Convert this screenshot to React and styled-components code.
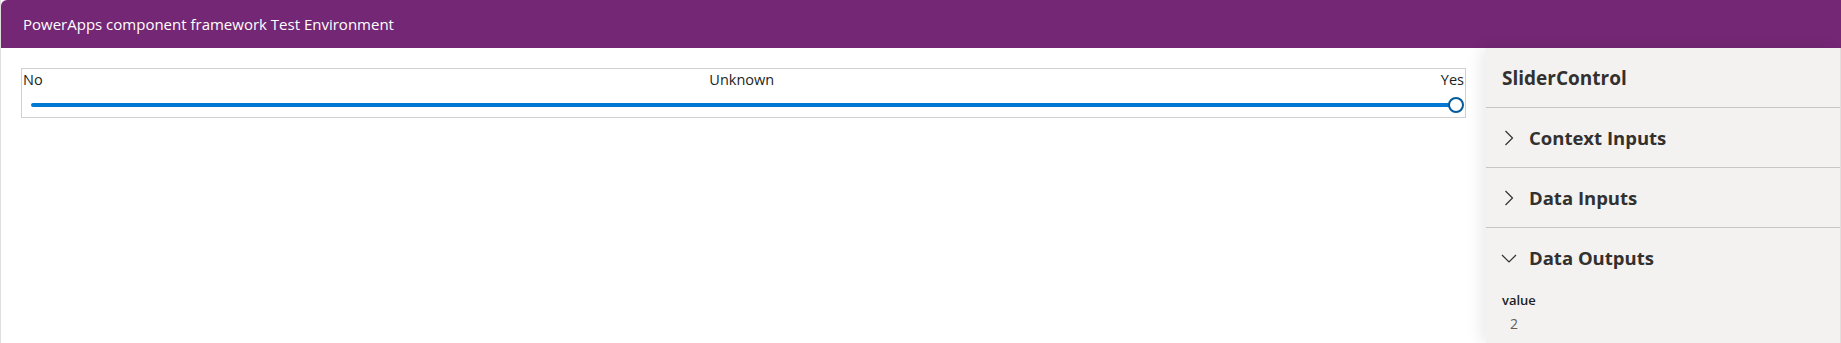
import React from 'react';
import styled, { createGlobalStyle } from 'styled-components';

const GlobalStyle = createGlobalStyle`
    html, body {
        margin: 0;
        padding: 0;
        background: #ffffff;
    }
    body {
        font-family: "Segoe UI", "Open Sans", "Noto Sans", sans-serif;
        color: #323130;
    }
`;

const sections = [
    { id: 'context', title: 'Context Inputs', open: false },
    { id: 'data-in', title: 'Data Inputs', open: false },
    { id: 'data-out', title: 'Data Outputs', open: true, outputs: [{ name: 'value', value: '2' }] },
];

const ChevronRight = () => (
    <svg width="10" height="16" viewBox="0 0 10 16">
        <path d="M1.5 1 L8.5 8 L1.5 15" fill="none" stroke="#323130" strokeWidth="1.2" />
    </svg>
);

const ChevronDown = () => (
    <svg width="16" height="10" viewBox="0 0 16 10">
        <path d="M1 2 L8 9 L15 2" fill="none" stroke="#323130" strokeWidth="1.2" />
    </svg>
);

const App = () => {
    return (
        <Page>
            <GlobalStyle />
            <Header>PowerApps component framework Test Environment</Header>
            <Body>
                <Main>
                    <SliderBox>
                        <Labels>
                            <span>No</span>
                            <span>Unknown</span>
                            <span>Yes</span>
                        </Labels>
                        <Track>
                            <Thumb />
                        </Track>
                    </SliderBox>
                </Main>
                <Panel>
                    <PanelTitle>SliderControl</PanelTitle>
                    {sections.map((section) => (
                        <Section key={section.id} open={section.open}>
                            <SectionHeader>
                                <ChevronSlot>{section.open ? <ChevronDown /> : <ChevronRight />}</ChevronSlot>
                                <span>{section.title}</span>
                            </SectionHeader>
                            {section.outputs &&
                                section.outputs.map((output) => (
                                    <Output key={output.name}>
                                        <OutputName>{output.name}</OutputName>
                                        <OutputValue>{output.value}</OutputValue>
                                    </Output>
                                ))}
                        </Section>
                    ))}
                </Panel>
            </Body>
        </Page>
    );
};

export default App;

const Page = styled.div`
    width: 1841px;
    height: 343px;
    display: flex;
    flex-direction: column;
    border-left: 1px solid #e1dfdd;
    box-sizing: border-box;
    overflow: hidden;
`;

const Header = styled.div`
    height: 48px;
    flex-shrink: 0;
    background-color: #742774;
    border-top-left-radius: 6px;
    color: #ffffff;
    font-size: 15px;
    display: flex;
    align-items: center;
    padding-left: 22px;
`;

const Body = styled.div`
    flex: 1;
    display: flex;
    flex-direction: row;
    min-height: 0;
`;

const Main = styled.div`
    flex: 1;
    padding: 20px 20px 0 20px;
`;

const SliderBox = styled.div`
    height: 50px;
    box-sizing: border-box;
    border: 1px solid #d2d0ce;
    padding: 0 1px;
    display: flex;
    flex-direction: column;
`;

const Labels = styled.div`
    display: flex;
    justify-content: space-between;
    font-size: 14.5px;
    line-height: 20px;
    margin-top: 1px;
    color: #201f1e;
`;

const Track = styled.div`
    position: relative;
    height: 4px;
    margin: 13px 8px 0 8px;
    border-radius: 2px;
    background-color: #0078d4;
`;

const Thumb = styled.span`
    position: absolute;
    right: -8px;
    top: -6px;
    width: 16px;
    height: 16px;
    box-sizing: border-box;
    border-radius: 50%;
    border: 2px solid #005a9e;
    background-color: #ffffff;
`;

const Panel = styled.div`
    width: 355px;
    flex-shrink: 0;
    background-color: #f3f2f1;
    box-shadow: -6px 0 14px rgba(0, 0, 0, 0.08);
    border-right: 1px solid #e1dfdd;
    box-sizing: border-box;
    position: relative;
`;

const PanelTitle = styled.div`
    height: 60px;
    box-sizing: border-box;
    border-bottom: 1px solid #c8c6c4;
    display: flex;
    align-items: center;
    padding-left: 16px;
    font-size: 19px;
    font-weight: 700;
    color: #323130;
`;

const Section = styled.div`
    border-bottom: ${(props) => (props.open ? 'none' : '1px solid #c8c6c4')};
`;

const SectionHeader = styled.div`
    height: 59px;
    display: flex;
    align-items: center;
    font-size: 18.5px;
    font-weight: 700;
    color: #323130;
`;

const ChevronSlot = styled.span`
    width: 43px;
    display: flex;
    justify-content: center;
    padding-left: 2px;
    box-sizing: border-box;
`;

const Output = styled.div`
    padding: 2px 16px;
    display: flex;
    flex-direction: column;
`;

const OutputName = styled.div`
    font-size: 13px;
    font-weight: 600;
    line-height: 22px;
    color: #201f1e;
`;

const OutputValue = styled.div`
    font-size: 14px;
    line-height: 26px;
    padding-left: 8px;
    color: #605e5c;
`;
